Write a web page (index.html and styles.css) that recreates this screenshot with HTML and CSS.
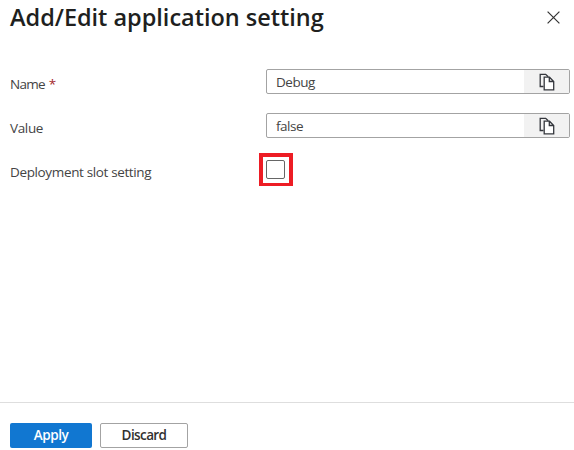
FILE: index.html
```
<!DOCTYPE html>
<html lang="en">
<head>
<meta charset="utf-8">
<title>Application setting</title>
<link rel="stylesheet" href="styles.css">
</head>
<body>
<main class="panel">
  <header class="header">
    <h1 class="title">Add/Edit application setting</h1>
    <button class="close" aria-label="Close"><svg width="13" height="13" viewBox="0 0 13 13"><path d="M.6.6 12.4 12.4M12.4.6.6 12.4"/></svg></button>
  </header>
  <section class="form">
    <div class="row">
      <div class="label name">Name <span class="required">*</span></div>
      <div class="field"><div class="value debug">Debug</div><button class="copy" aria-label="Copy"><svg width="16" height="18" viewBox="0 0 16 18"><path class="back" d="M4.5 13.5H1.2V1.3h5.5l2.5 2.5"/><path class="front" d="M5.2 4.2h5.3l4.2 4.3v8.3H5.2zM10.3 4.2v4.3h4.4"/></svg></button></div>
    </div>
    <div class="row">
      <div class="label">Value</div>
      <div class="field"><div class="value">false</div><button class="copy" aria-label="Copy"><svg width="16" height="18" viewBox="0 0 16 18"><path class="back" d="M4.5 13.5H1.2V1.3h5.5l2.5 2.5"/><path class="front" d="M5.2 4.2h5.3l4.2 4.3v8.3H5.2zM10.3 4.2v4.3h4.4"/></svg></button></div>
    </div>
    <div class="row">
      <div class="label">Deployment slot setting</div>
      <div class="highlight"><div class="checkbox" role="checkbox" aria-checked="false"></div></div>
    </div>
  </section>
  <footer class="footer">
    <button class="btn primary">Apply</button>
    <button class="btn secondary">Discard</button>
  </footer>
</main>
</body>
</html>
```
FILE: styles.css
```
* { box-sizing: border-box; }
body {
  margin: 0;
  background: #fff;
  color: #444;
  font: 13.5px/20px "Segoe UI", "Open Sans", "Noto Sans", sans-serif;
}
button { font: inherit; padding: 0; border: 0; background: none; }
.panel { width: 574px; height: 450px; display: flex; flex-direction: column; overflow: hidden; }
.header { height: 59px; padding: 0 14px 0 10px; display: flex; justify-content: space-between; align-items: flex-start; }
.title { margin: 0; font-size: 23.5px; line-height: 34px; font-weight: 600; color: #201f1e; white-space: nowrap; letter-spacing: -.02px; }
.close { margin-top: 11px; height: 13px; }
svg { display: block; fill: none; stroke: #333; stroke-width: 1.2; }
.form { flex: 1; }
.row { height: 44px; padding: 10px 4px 0 10px; display: flex; align-items: flex-start; }
.label { width: 256px; padding-top: 5px; white-space: nowrap; letter-spacing: -.36px; }
.name { letter-spacing: -.7px; }
.required { color: #a4262c; padding-left: 1px; }
.field { width: 304px; height: 25px; display: flex; border: 1px solid #a3a3a3; border-radius: 2px; overflow: hidden; }
.value { flex: 1; padding-left: 9px; line-height: 24px; letter-spacing: -.5px; }
.copy { width: 45px; height: 23px; background: #f2f2f2; display: flex; align-items: center; justify-content: center; }
.copy svg { stroke: #34373d; stroke-width: 1.3; }
.front { fill: #fff; }
.highlight { width: 34px; height: 33px; margin: -4px 0 0 -7px; border: 4px solid #ed1c24; border-bottom-width: 3px; padding: 3px; }
.checkbox { width: 19px; height: 19px; border: 1px solid #666; border-radius: 2px; }
.footer { height: 48px; padding: 20px 10px 0; border-top: 1px solid #dedede; display: flex; gap: 8px; }
.btn { height: 25px; border-radius: 2px; font-weight: 600; line-height: 25px; letter-spacing: -.4px; }
.primary { width: 82px; background: #1177d1; color: #fff; }
.secondary { width: 88px; border: 1px solid #a3a3a3; background: #fff; color: #323130; line-height: 23px; letter-spacing: -.6px; }
```
